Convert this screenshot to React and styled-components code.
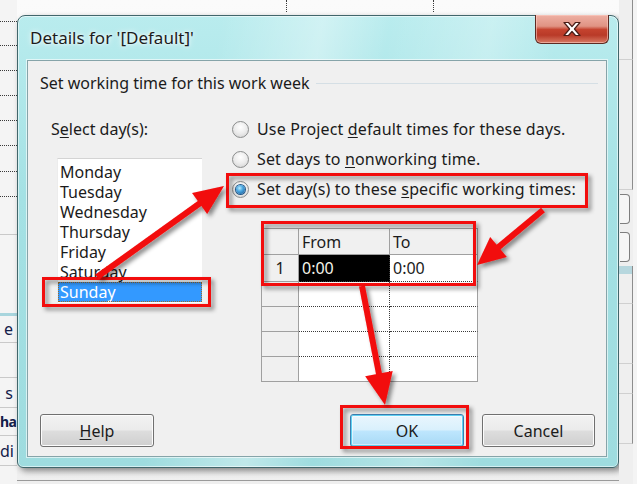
import React from "react";
import styled, { createGlobalStyle } from "styled-components";

const FONT = '"Noto Sans", "Open Sans", "DejaVu Sans", sans-serif';

const GlobalStyle = createGlobalStyle`
  html, body { margin: 0; padding: 0; background: #f3f3f3; }
  body { font-family: ${FONT}; }
  * { box-sizing: border-box; }
`;

const Screen = styled.div`
  position: relative;
  width: 637px;
  height: 484px;
  overflow: hidden;
  display: grid;
  grid-template-columns: 17px 602px 18px;
  background: linear-gradient(#fbfbfb, #efefef);
  font-family: ${FONT};
  color: #1b1b1b;
`;

/* ---------- background application strips ---------- */
const LeftStrip = styled.div`
  display: flex;
  flex-direction: column;
  background: #f4f4f4;
`;

const LeftRow = styled.div`
  flex: none;
  height: ${(p) => p.$h}px;
  display: flex;
  align-items: center;
  justify-content: ${(p) => (p.$end ? "flex-end" : "flex-start")};
  padding-right: ${(p) => (p.$end ? "4px" : "0")};
  white-space: nowrap;
  font-size: ${(p) => (p.$bold ? 14 : 16)}px;
  letter-spacing: ${(p) => (p.$bold ? "-0.5px" : "0")};
  font-weight: ${(p) => (p.$bold ? 700 : 400)};
  color: #13204a;
  border-bottom: ${(p) =>
    p.$kind === "dot"
      ? "1px dotted #3a3a3a"
      : p.$kind === "solid"
      ? "1px solid #c9c9c9"
      : p.$kind === "band"
      ? "3px solid #a8d5dd"
      : "none"};
`;

const Center = styled.div`
  display: flex;
  flex-direction: column;
`;

const TopStrip = styled.div`
  height: 15px;
  flex: none;
  display: flex;
`;

const TopCell = styled.div`
  width: ${(p) => p.$w}px;
  height: 12px;
  border-right: ${(p) => (p.$line ? "1px dotted #3a3a3a" : "none")};
`;

const BottomStrip = styled.div`
  flex: 1;
  border-bottom: 1px solid #9a9a9a;
  margin-bottom: 5px;
`;

const RightStrip = styled.div`
  display: flex;
  flex-direction: column;
  background: #efefef;
  border-right: 4px solid #f4f4f4;
`;

const RightRow = styled.div`
  flex: none;
  height: ${(p) => p.$h}px;
  border-right: 1px solid #8d8d8d;
  border-bottom: ${(p) => (p.$band ? "none" : "1px solid #d0d0d0")};
  background: ${(p) => (p.$band ? "#b7d7de" : "transparent")};
`;

const RightBox = styled.div`
  flex: none;
  height: ${(p) => p.$h}px;
  margin: 4px 3px 4px 1px;
  border: 1px solid #7e7e7e;
  border-left: none;
  border-radius: 0 4px 4px 0;
  background: #f6f6f6;
`;

/* ---------- dialog window ---------- */
const Window = styled.div`
  flex: none;
  height: 453px;
  display: flex;
  flex-direction: column;
  border: 1px solid #41666b;
  border-radius: 8px 8px 6px 6px;
  background: linear-gradient(
      100deg,
      rgba(255, 255, 255, 0) 30%,
      rgba(255, 255, 255, 0.35) 45%,
      rgba(255, 255, 255, 0) 55%,
      rgba(255, 255, 255, 0.25) 70%,
      rgba(255, 255, 255, 0) 80%
    ),
    linear-gradient(#b9ecee, #a4e1e4 40%, #9edcdf);
  box-shadow: inset 0 0 0 1px rgba(255, 255, 255, 0.55),
    3px 3px 6px rgba(0, 0, 0, 0.45);
`;

const TitleBar = styled.div`
  height: 44px;
  flex: none;
  display: flex;
  justify-content: space-between;
  align-items: flex-start;
`;

const Title = styled.div`
  padding-left: 12px;
  margin-top: 11px;
  font-size: 17px;
  line-height: 22px;
  color: #1c1c1c;
  text-shadow: 0 0 6px rgba(255, 255, 255, 0.95), 0 0 3px rgba(255, 255, 255, 0.9);
`;

const CloseButton = styled.div`
  width: 74px;
  height: 29px;
  margin: -1px 9px 0 0;
  display: flex;
  align-items: center;
  justify-content: center;
  border: 1px solid #5e2a22;
  border-top: none;
  border-radius: 0 0 6px 6px;
  background: linear-gradient(
    #eeb0a4 0%,
    #e09383 40%,
    #c5432f 52%,
    #b93a28 72%,
    #d87a64 100%
  );
  box-shadow: inset 0 0 0 1px rgba(255, 210, 200, 0.55);
`;

const FrameBody = styled.div`
  flex: 1;
  display: flex;
  padding: 0 11px 10px 9px;
`;

const Panel = styled.div`
  flex: 1;
  display: flex;
  flex-direction: column;
  background: #f0f0f0;
  border: 1px solid #86a4a9;
  box-shadow: 0 0 0 1px rgba(255, 255, 255, 0.6);
  padding: 0 8px 9px 12px;
`;

const GroupHeader = styled.div`
  margin-top: 13px;
  height: 18px;
  display: flex;
  align-items: center;
  font-size: 16px;
  white-space: nowrap;
`;

const GroupLine = styled.div`
  flex: 1;
  height: 1px;
  margin-left: 6px;
  background: #d5dfe5;
`;

const Body = styled.div`
  margin-top: 27px;
  display: flex;
`;

const LeftCol = styled.div`
  width: 192px;
  flex: none;
  padding-left: 11px;
  display: flex;
  flex-direction: column;
`;

const Label = styled.div`
  height: 20px;
  line-height: 20px;
  font-size: 16px;
  white-space: nowrap;
`;

const Acc = styled.span`
  text-decoration: underline;
  text-underline-offset: 2px;
`;

const ListBox = styled.div`
  margin: 19px 0 0 6px;
  width: 145px;
  background: #fff;
  border-top: 1px solid #d4d4d4;
  border-left: 1px solid #ececec;
  padding: 3px 0 1px;
  display: flex;
  flex-direction: column;
`;

const ListItem = styled.div`
  height: 20px;
  line-height: 20px;
  padding-left: 2px;
  font-size: 16px;
  color: ${(p) => (p.$selected ? "#ffffff" : "#1b1b1b")};
  background: ${(p) => (p.$selected ? "#3399ff" : "transparent")};
  outline: ${(p) => (p.$selected ? "1px dotted #9a6a2a" : "none")};
  outline-offset: -1px;
`;

const RightCol = styled.div`
  display: flex;
  flex-direction: column;
`;

const RadioList = styled.div`
  display: flex;
  flex-direction: column;
  gap: 10px;
`;

const RadioRow = styled.div`
  height: 20px;
  display: flex;
  align-items: center;
  gap: 8px;
  font-size: 16px;
  letter-spacing: 0.15px;
  white-space: nowrap;
`;

const RadioDot = styled.span`
  width: 17px;
  height: 17px;
  flex: none;
  border-radius: 50%;
  border: 1px solid #8b8d8d;
  background: radial-gradient(circle at 50% 35%, #ffffff 0%, #ececec 50%, #cfcfcf 100%);
  display: flex;
  align-items: center;
  justify-content: center;
  &::after {
    content: "";
    display: ${(p) => (p.$checked ? "block" : "none")};
    width: 9px;
    height: 9px;
    border-radius: 50%;
    background: radial-gradient(circle at 40% 35%, #b6ecff 0%, #4aa6e0 40%, #0f4f8c 100%);
    box-shadow: 0 0 0 1px #24598a;
  }
`;

const Table = styled.div`
  margin: 29px 0 0 29px;
  display: grid;
  grid-template-columns: 37px 91px 88px;
  grid-template-rows: 26px 27px 25px 25px 25px 25px;
  border-left: 1px solid #a0a0a0;
  border-top: 1px solid #a0a0a0;
  width: 217px;
`;

const Cell = styled.div`
  display: flex;
  align-items: center;
  justify-content: ${(p) => (p.$kind === "rowhead" ? "center" : "flex-start")};
  padding-left: ${(p) => (p.$kind === "rowhead" ? "0" : "3px")};
  font-size: 16px;
  white-space: nowrap;
  background: ${(p) =>
    p.$kind === "head" || p.$kind === "rowhead"
      ? "#f0f0f0"
      : p.$active
      ? "#000000"
      : "#ffffff"};
  color: ${(p) => (p.$active ? "#f4f4e8" : "#1b1b1b")};
  border-right: ${(p) =>
    p.$kind === "data" && !p.$lastCol ? "1px dotted #3a3a3a" : "1px solid #a0a0a0"};
  border-bottom: ${(p) =>
    p.$kind === "data" && !p.$lastRow ? "1px dotted #3a3a3a" : "1px solid #a0a0a0"};
`;

const ButtonRow = styled.div`
  margin-top: auto;
  display: flex;
  align-items: center;
  padding-right: 3px;
`;

const Spacer = styled.div`
  flex: 1;
`;

const Button = styled.div`
  width: ${(p) => p.$w}px;
  height: 33px;
  margin-left: ${(p) => p.$ml || 0}px;
  display: flex;
  align-items: center;
  justify-content: center;
  font-size: 16px;
  color: #1b1b1b;
  border-radius: 3px;
  border: 1px solid ${(p) => (p.$default ? "#3c7fb1" : "#707070")};
  background: ${(p) =>
    p.$default
      ? "linear-gradient(#eaf6fd 0%, #d9f0fc 48%, #bee6fd 52%, #a7d9f5 100%)"
      : "linear-gradient(#f2f2f2 0%, #ebebeb 48%, #dddddd 52%, #cfcfcf 100%)"};
  box-shadow: ${(p) =>
    p.$default
      ? "inset 0 0 0 1px #5fd1f3, inset 0 0 0 2px rgba(255,255,255,0.5)"
      : "inset 0 0 0 1px #fcfcfc"};
`;

/* ---------- annotation overlay ---------- */
const Overlay = styled.svg`
  position: absolute;
  left: 0;
  top: 0;
  width: 637px;
  height: 484px;
  pointer-events: none;
`;

const RED = "#f20a0a";

function Arrow({ from, tip, len = 30, half = 13 }) {
  const dx = tip[0] - from[0];
  const dy = tip[1] - from[1];
  const L = Math.hypot(dx, dy);
  const ux = dx / L;
  const uy = dy / L;
  const bx = tip[0] - ux * len;
  const by = tip[1] - uy * len;
  const px = -uy;
  const py = ux;
  const pts = `${tip[0]},${tip[1]} ${bx + px * half},${by + py * half} ${bx - px * half},${by - py * half}`;
  return (
    <g>
      <line x1={from[0]} y1={from[1]} x2={bx + ux * 2} y2={by + uy * 2} stroke={RED} strokeWidth="6" />
      <polygon points={pts} fill={RED} />
    </g>
  );
}

const days = ["Monday", "Tuesday", "Wednesday", "Thursday", "Friday", "Saturday", "Sunday"];

const leftRows = [
  { h: 22, k: "dot" },
  { h: 24, k: "dot" },
  { h: 25, k: "dot" },
  { h: 25, k: "dot" },
  { h: 25, k: "dot" },
  { h: 25, k: "dot" },
  { h: 26, k: "dot" },
  { h: 25, k: "dot" },
  { h: 38, k: "solid" },
  { h: 78, k: "blank" },
  { h: 3, k: "band" },
  { h: 27, k: "solid", t: "e", end: true },
  { h: 35, k: "solid" },
  { h: 30, k: "solid", t: "s", end: true },
  { h: 28, k: "solid", t: "ha", bold: true },
  { h: 30, k: "solid", t: "di" },
  { h: 20, k: "blank" },
];

export default function App() {
  const rows = [1, 2, 3, 4, 5];
  return (
    <>
      <GlobalStyle />
      <Screen>
        <LeftStrip>
          {leftRows.map((r, i) => (
            <LeftRow key={i} $h={r.h} $kind={r.k} $end={r.end} $bold={r.bold}>
              {r.t}
            </LeftRow>
          ))}
        </LeftStrip>

        <Center>
          <TopStrip>
            <TopCell $w={270} $line />
            <TopCell $w={147} $line />
          </TopStrip>

          <Window>
            <TitleBar>
              <Title>Details for '[Default]'</Title>
              <CloseButton>
                <svg width="22" height="16" viewBox="0 0 22 16">
                  <path
                    d="M3 1.5 L7.5 1.5 L11 5.6 L14.5 1.5 L19 1.5 L13.4 8 L19 14.5 L14.5 14.5 L11 10.4 L7.5 14.5 L3 14.5 L8.6 8 Z"
                    fill="#ffffff"
                    stroke="#4a1d17"
                    strokeWidth="1.2"
                    strokeLinejoin="round"
                  />
                </svg>
              </CloseButton>
            </TitleBar>

            <FrameBody>
              <Panel>
                <GroupHeader>
                  Set working time for this work week
                  <GroupLine />
                </GroupHeader>

                <Body>
                  <LeftCol>
                    <Label>
                      S<Acc>e</Acc>lect day(s):
                    </Label>
                    <ListBox>
                      {days.map((d) => (
                        <ListItem key={d} $selected={d === "Sunday"}>
                          {d}
                        </ListItem>
                      ))}
                    </ListBox>
                  </LeftCol>

                  <RightCol>
                    <RadioList>
                      <RadioRow>
                        <RadioDot />
                        <span>
                          Use Project <Acc>d</Acc>efault times for these days.
                        </span>
                      </RadioRow>
                      <RadioRow>
                        <RadioDot />
                        <span>
                          Set days to <Acc>n</Acc>onworking time.
                        </span>
                      </RadioRow>
                      <RadioRow>
                        <RadioDot $checked />
                        <span>
                          Set day(s) to these <Acc>s</Acc>pecific working times:
                        </span>
                      </RadioRow>
                    </RadioList>

                    <Table>
                      <Cell $kind="rowhead" />
                      <Cell $kind="head">From</Cell>
                      <Cell $kind="head">To</Cell>
                      {rows.map((n) => (
                        <React.Fragment key={n}>
                          <Cell $kind="rowhead">{n === 1 ? "1" : ""}</Cell>
                          <Cell $kind="data" $active={n === 1} $lastRow={n === 5}>
                            {n === 1 ? "0:00" : ""}
                          </Cell>
                          <Cell $kind="data" $lastCol $lastRow={n === 5}>
                            {n === 1 ? "0:00" : ""}
                          </Cell>
                        </React.Fragment>
                      ))}
                    </Table>
                  </RightCol>
                </Body>

                <ButtonRow>
                  <Button $w={114}>
                    <span>
                      <Acc>H</Acc>elp
                    </span>
                  </Button>
                  <Spacer />
                  <Button $w={114} $default>
                    OK
                  </Button>
                  <Button $w={113} $ml={18}>
                    Cancel
                  </Button>
                </ButtonRow>
              </Panel>
            </FrameBody>
          </Window>

          <BottomStrip />
        </Center>

        <RightStrip>
          <RightRow $h={60} />
          <RightRow $h={130} />
          <RightBox $h={30} />
          <RightBox $h={30} />
          <RightRow $h={8} $band />
          <RightRow $h={30} />
          <RightRow $h={60} />
          <RightRow $h={30} />
          <RightRow $h={50} />
        </RightStrip>

        <Overlay viewBox="0 0 637 484">
          <defs>
            <filter id="shadow" x="-20%" y="-20%" width="140%" height="140%">
              <feDropShadow dx="3" dy="3" stdDeviation="2" floodColor="#000" floodOpacity="0.45" />
            </filter>
          </defs>
          <g filter="url(#shadow)" fill="none" stroke={RED} strokeWidth="3">
            <rect x="43.5" y="278.5" width="166" height="27" />
            <rect x="227.5" y="174.5" width="359" height="32" />
            <rect x="262.5" y="222.5" width="212" height="62" />
            <rect x="341.5" y="406.5" width="126" height="41" />
          </g>
          <g filter="url(#shadow)">
            <Arrow from={[97, 277]} tip={[224, 186]} len={30} half={13} />
            <Arrow from={[543, 210]} tip={[477, 265]} len={28} half={13} />
            <Arrow from={[362, 286]} tip={[385, 405]} len={32} half={14} />
          </g>
        </Overlay>
      </Screen>
    </>
  );
}
